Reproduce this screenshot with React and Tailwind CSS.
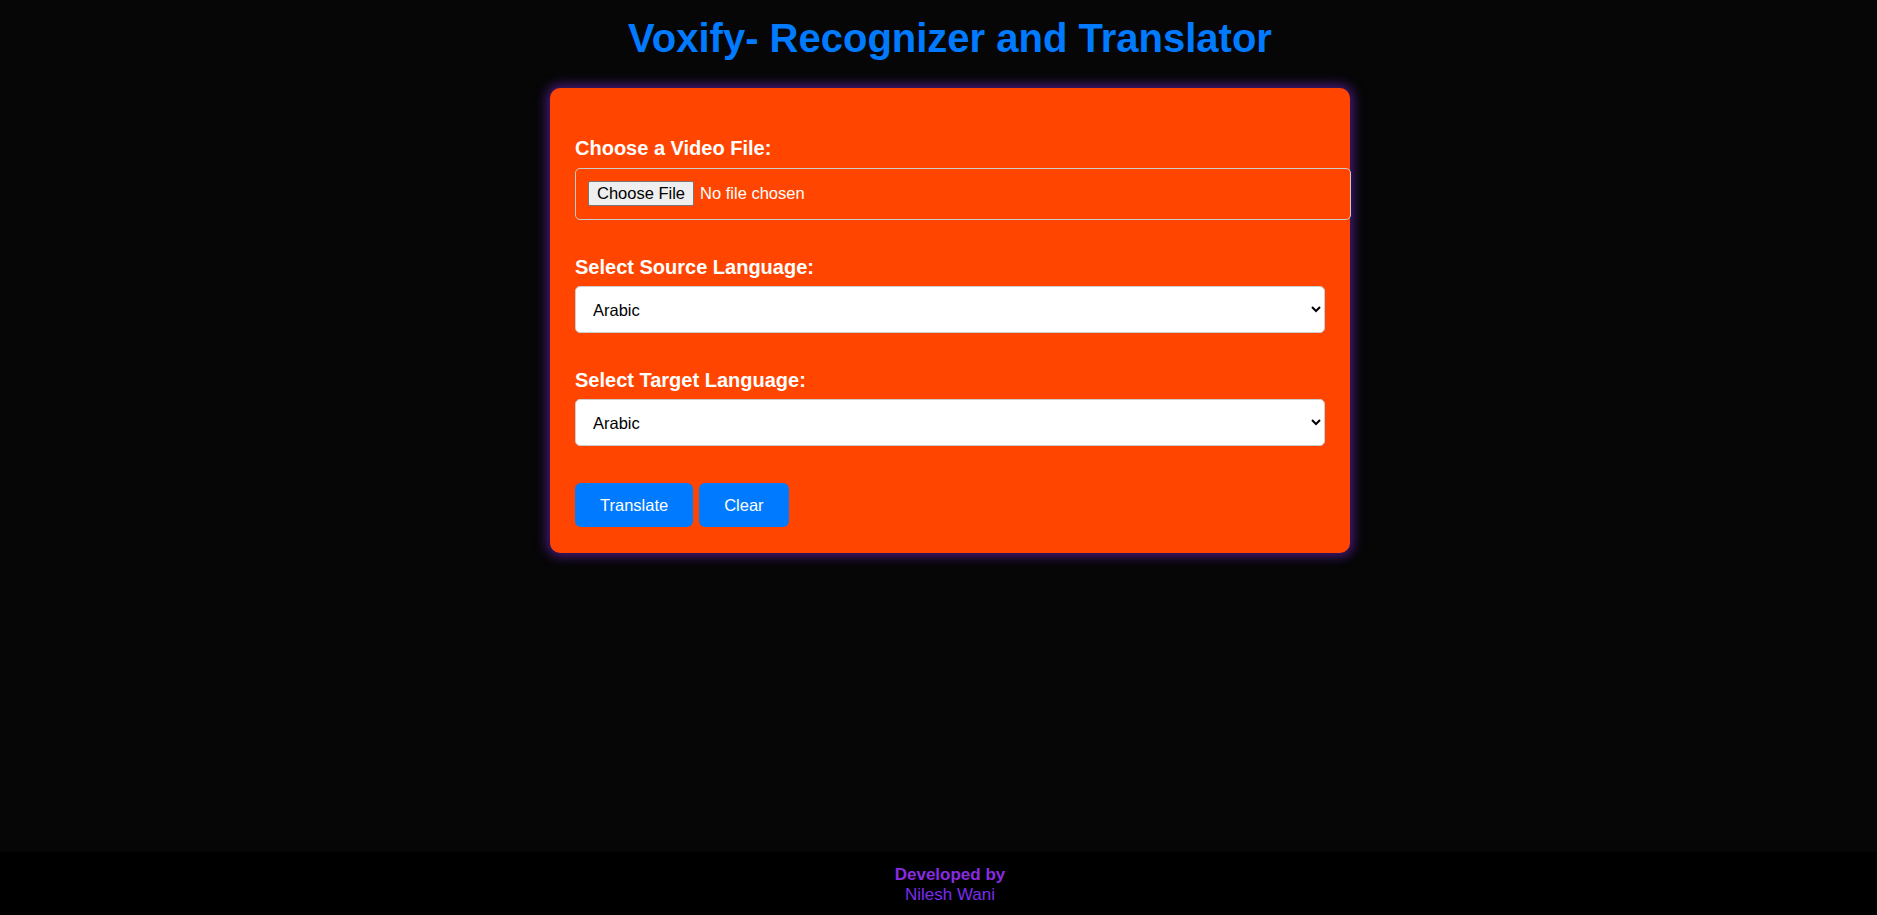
import React from "react";

const languages = ["Arabic", "English", "French", "German", "Hindi", "Spanish"];

function Field({ label, children, className = "", gap = "mb-[8px]" }) {
  return (
    <div className={className}>
      <label className={`block text-[20px] leading-[23px] font-bold text-white ${gap}`}>{label}</label>
      {children}
    </div>
  );
}

function LangSelect() {
  return (
    <select
      defaultValue="Arabic"
      className="block w-full h-[47px] bg-white text-black text-[16.5px] leading-[normal] border border-[#cccccc] rounded-[5px] pl-[13px] pr-[4px]"
    >
      {languages.map((l) => (
        <option key={l}>{l}</option>
      ))}
    </select>
  );
}

export default function App() {
  return (
    <div className="min-h-screen flex flex-col bg-[#060606] font-['Liberation_Sans',Arial,sans-serif]">
      <main className="flex-1 flex flex-col items-center pl-[23px]">
        <h1 className="mt-[15px] text-[40px] leading-[46px] font-bold text-[#007bff]">
          Voxify- Recognizer and Translator
        </h1>
        <div className="mt-[27px] w-[800px] bg-[#ff4500] rounded-[10px] px-[25px] pt-[49px] pb-[26px] shadow-[0_0_12px_3px_rgba(120,40,210,0.6)]">
          <Field label="Choose a Video File:">
            <input
              type="file"
              accept="video/*"
              className="block box-content w-full h-[26px] p-[12px] border border-[#cccccc] rounded-[5px] text-[16.5px] leading-[normal] text-white file:bg-[#efefef] file:text-black file:border file:border-[#767676] file:rounded-[2px] file:px-[8px] file:py-[2px] file:mr-[6px] file:text-[16.5px] file:leading-[normal]"
            />
          </Field>
          <Field label="Select Source Language:" className="mt-[36px]" gap="mb-[7px]">
            <LangSelect />
          </Field>
          <Field label="Select Target Language:" className="mt-[36px]" gap="mb-[7px]">
            <LangSelect />
          </Field>
          <div className="mt-[37px] flex gap-[6px]">
            <button className="h-[44px] px-[25px] bg-[#007bff] text-white text-[16.5px] leading-[normal] rounded-[6px]">
              Translate
            </button>
            <button className="h-[44px] px-[25px] bg-[#007bff] text-white text-[16.5px] leading-[normal] rounded-[6px]">
              Clear
            </button>
          </div>
        </div>
      </main>
      <footer className="bg-black pt-[13px] pb-[10px] pl-[23px] text-center text-[17px] leading-[20px]">
        <div className="font-bold text-[#8a2be2]">Developed by</div>
        <div className="text-[#7b2cf0]">Nilesh Wani</div>
      </footer>
    </div>
  );
}
